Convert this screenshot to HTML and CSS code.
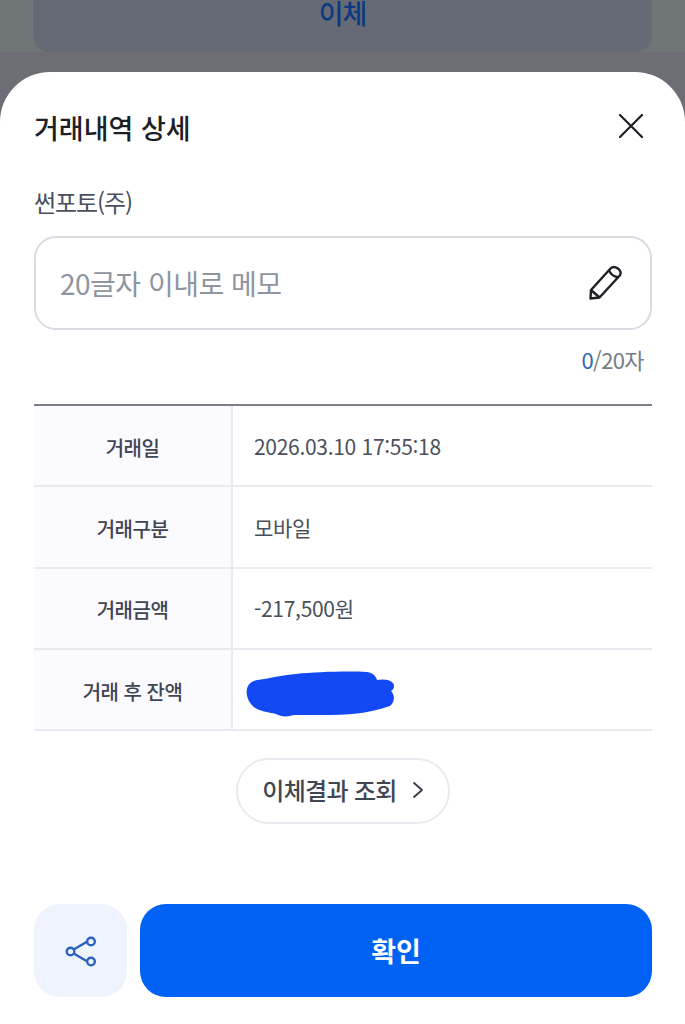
FILE: index.html
```html
<!DOCTYPE html>
<html lang="ko">
<head>
    <meta charset="UTF-8">
    <meta name="viewport" content="width=device-width, initial-scale=1.0">
    <title>거래내역 상세</title>
    <link rel="stylesheet" href="styles.css">
</head>
<body>
<div class="backdrop">
    <div class="backdrop-button">이체</div>
</div>
<div class="sheet">
    <div class="sheet-header">
        <h1 class="sheet-title">거래내역 상세</h1>
        <svg class="close-icon" width="28" height="28" viewBox="0 0 28 28">
            <path d="M3 3L25 25M25 3L3 25" fill="none" stroke="#1c2026" stroke-width="2.2" stroke-linecap="round"/>
        </svg>
    </div>
    <div class="payee">썬포토(주)</div>
    <div class="memo-box">
        <span class="memo-placeholder">20글자 이내로 메모</span>
        <svg class="pencil-icon" width="36" height="36" viewBox="0 0 36 36">
            <path d="M2.5 33.5L3 25L22.5 3.5C24.5 1.5 27 1.5 29.5 3.2C32.5 5.2 33.5 8 31.8 10.5L11.5 32.5Z M21 5.5C23 9.5 26.5 12 30.5 12.2 M3 25L11.5 32.5" fill="none" stroke="#1c2026" stroke-width="2.4" stroke-linejoin="round"/>
        </svg>
    </div>
    <div class="memo-count"><span class="memo-count-now">0</span>/20자</div>
    <div class="detail-table">
        <div class="detail-row">
            <div class="detail-label">거래일</div>
            <div class="detail-value">2026.03.10 17:55:18</div>
        </div>
        <div class="detail-row">
            <div class="detail-label">거래구분</div>
            <div class="detail-value">모바일</div>
        </div>
        <div class="detail-row">
            <div class="detail-label">거래금액</div>
            <div class="detail-value">-217,500원</div>
        </div>
        <div class="detail-row">
            <div class="detail-label">거래 후 잔액</div>
            <div class="detail-value">
                <!-- balance was scribbled out in the screenshot -->
                <svg class="scribble" width="150" height="46" viewBox="0 0 150 46">
                    <path d="M1 18C2 13 6 10 11 9C16 9 30 5 50 3C70 1 100 0 121 1C127 2 130 5 131 9C136 8 144 8 147 12C149 15 148 18 145 20C149 24 149 31 144 35C130 40 110 44 85 44C70 44 55 44 48 44C42 46 35 46 30 43C20 41 10 40 5 33C1 28 0 22 1 18Z" fill="#1249f5"/>
                </svg>
            </div>
        </div>
    </div>
    <div class="result-wrap">
        <div class="result-button">
            <span>이체결과 조회</span>
            <svg width="12" height="18" viewBox="0 0 12 18">
                <path d="M2 2L10 9L2 16" fill="none" stroke="#333a44" stroke-width="1.8" stroke-linecap="round" stroke-linejoin="round"/>
            </svg>
        </div>
    </div>
    <div class="action-bar">
        <div class="share-button">
            <svg width="32" height="32" viewBox="0 0 32 32">
                <g fill="none" stroke="#2a62bd" stroke-width="2.4">
                    <path d="M7 15.5L21.5 7M7 17.5L21.5 26"/>
                    <circle cx="5.5" cy="16.5" r="3.8" fill="#eff3fe"/>
                    <circle cx="26" cy="6.5" r="3.8" fill="#eff3fe"/>
                    <circle cx="26" cy="26.5" r="3.8" fill="#eff3fe"/>
                </g>
            </svg>
        </div>
        <div class="confirm-button">확인</div>
    </div>
</div>
</body>
</html>
```

FILE: styles.css
```css
* {
    box-sizing: border-box;
}
html, body {
    margin: 0;
    padding: 0;
}
body {
    width: 685px;
    height: 1024px;
    overflow: hidden;
    background-color: #6d6e75;
    font-family: "Noto Sans CJK KR", "Noto Sans", sans-serif;
    color: #3f4651;
}
.backdrop {
    height: 52px;
    padding: 0 33px;
    background-color: #707578;
}
.backdrop-button {
    height: 52px;
    padding-bottom: 28px;
    display: flex;
    align-items: center;
    justify-content: center;
    background-color: #656a75;
    border-radius: 0 0 16px 16px;
    color: #0c3a80;
    font-size: 27px;
    font-weight: 500;
    letter-spacing: -1px;
}
.sheet {
    margin-top: 20px;
    height: 952px;
    padding: 0 33px 0 34px;
    background-color: #fff;
    border-radius: 50px 50px 0 0;
}
.sheet-header {
    height: 69px;
    padding-top: 42px;
    display: flex;
    align-items: center;
    justify-content: space-between;
}
.sheet-title {
    margin: 0;
    font-size: 27px;
    font-weight: 500;
    color: #1c2026;
}
.close-icon {
    margin-right: 7px;
    margin-top: -4px;
}
.payee {
    margin-top: 44px;
    height: 34px;
    line-height: 34px;
    font-size: 24px;
    letter-spacing: -1.1px;
    color: #4a505c;
}
.memo-box {
    margin-top: 17px;
    height: 94px;
    padding: 0 27px 0 24px;
    display: flex;
    align-items: center;
    justify-content: space-between;
    border: 2px solid #d9dbe3;
    border-radius: 22px;
}
.memo-placeholder {
    font-size: 28px;
    letter-spacing: -0.5px;
    color: #8e95a0;
}
.pencil-icon {
    margin-right: -1px;
}
.memo-count {
    margin-top: 12px;
    height: 34px;
    line-height: 34px;
    text-align: right;
    padding-right: 8px;
    font-size: 22px;
    letter-spacing: -0.6px;
    color: #767c87;
}
.memo-count-now {
    color: #2f6bb0;
}
.detail-table {
    margin-top: 28px;
    border-top: 2px solid #7b7f88;
}
.detail-row {
    height: 81.3px;
    display: flex;
    border-bottom: 2px solid #e9eaf0;
}
.detail-label {
    width: 199px;
    padding-top: 3px;
    display: flex;
    align-items: center;
    justify-content: center;
    background-color: #fbfaff;
    border-right: 2px solid #e9eaf0;
    font-size: 20px;
    font-weight: 500;
    letter-spacing: -0.5px;
    color: #3f4651;
}
.detail-value {
    flex: 1;
    padding-left: 21px;
    display: flex;
    align-items: center;
    font-size: 21px;
    letter-spacing: -0.3px;
    color: #4a505c;
}
.scribble {
    margin-left: -8px;
    margin-top: 8px;
}
.result-wrap {
    margin-top: 27px;
    display: flex;
    justify-content: center;
}
.result-button {
    width: 214px;
    height: 66px;
    padding-bottom: 3px;
    display: flex;
    align-items: center;
    justify-content: center;
    gap: 15px;
    border: 2px solid #e9eaf0;
    border-radius: 33px;
    font-size: 24px;
    font-weight: 500;
    letter-spacing: -0.7px;
    color: #3f4651;
}
.action-bar {
    margin-top: 80px;
    display: flex;
    gap: 13px;
}
.share-button {
    width: 93px;
    height: 93px;
    display: flex;
    align-items: center;
    justify-content: center;
    background-color: #eff3fe;
    border-radius: 26px;
}
.confirm-button {
    flex: 1;
    height: 93px;
    display: flex;
    align-items: center;
    justify-content: center;
    background-color: #0062f5;
    border-radius: 26px;
    font-size: 27px;
    font-weight: 700;
    color: #fff;
}
```
